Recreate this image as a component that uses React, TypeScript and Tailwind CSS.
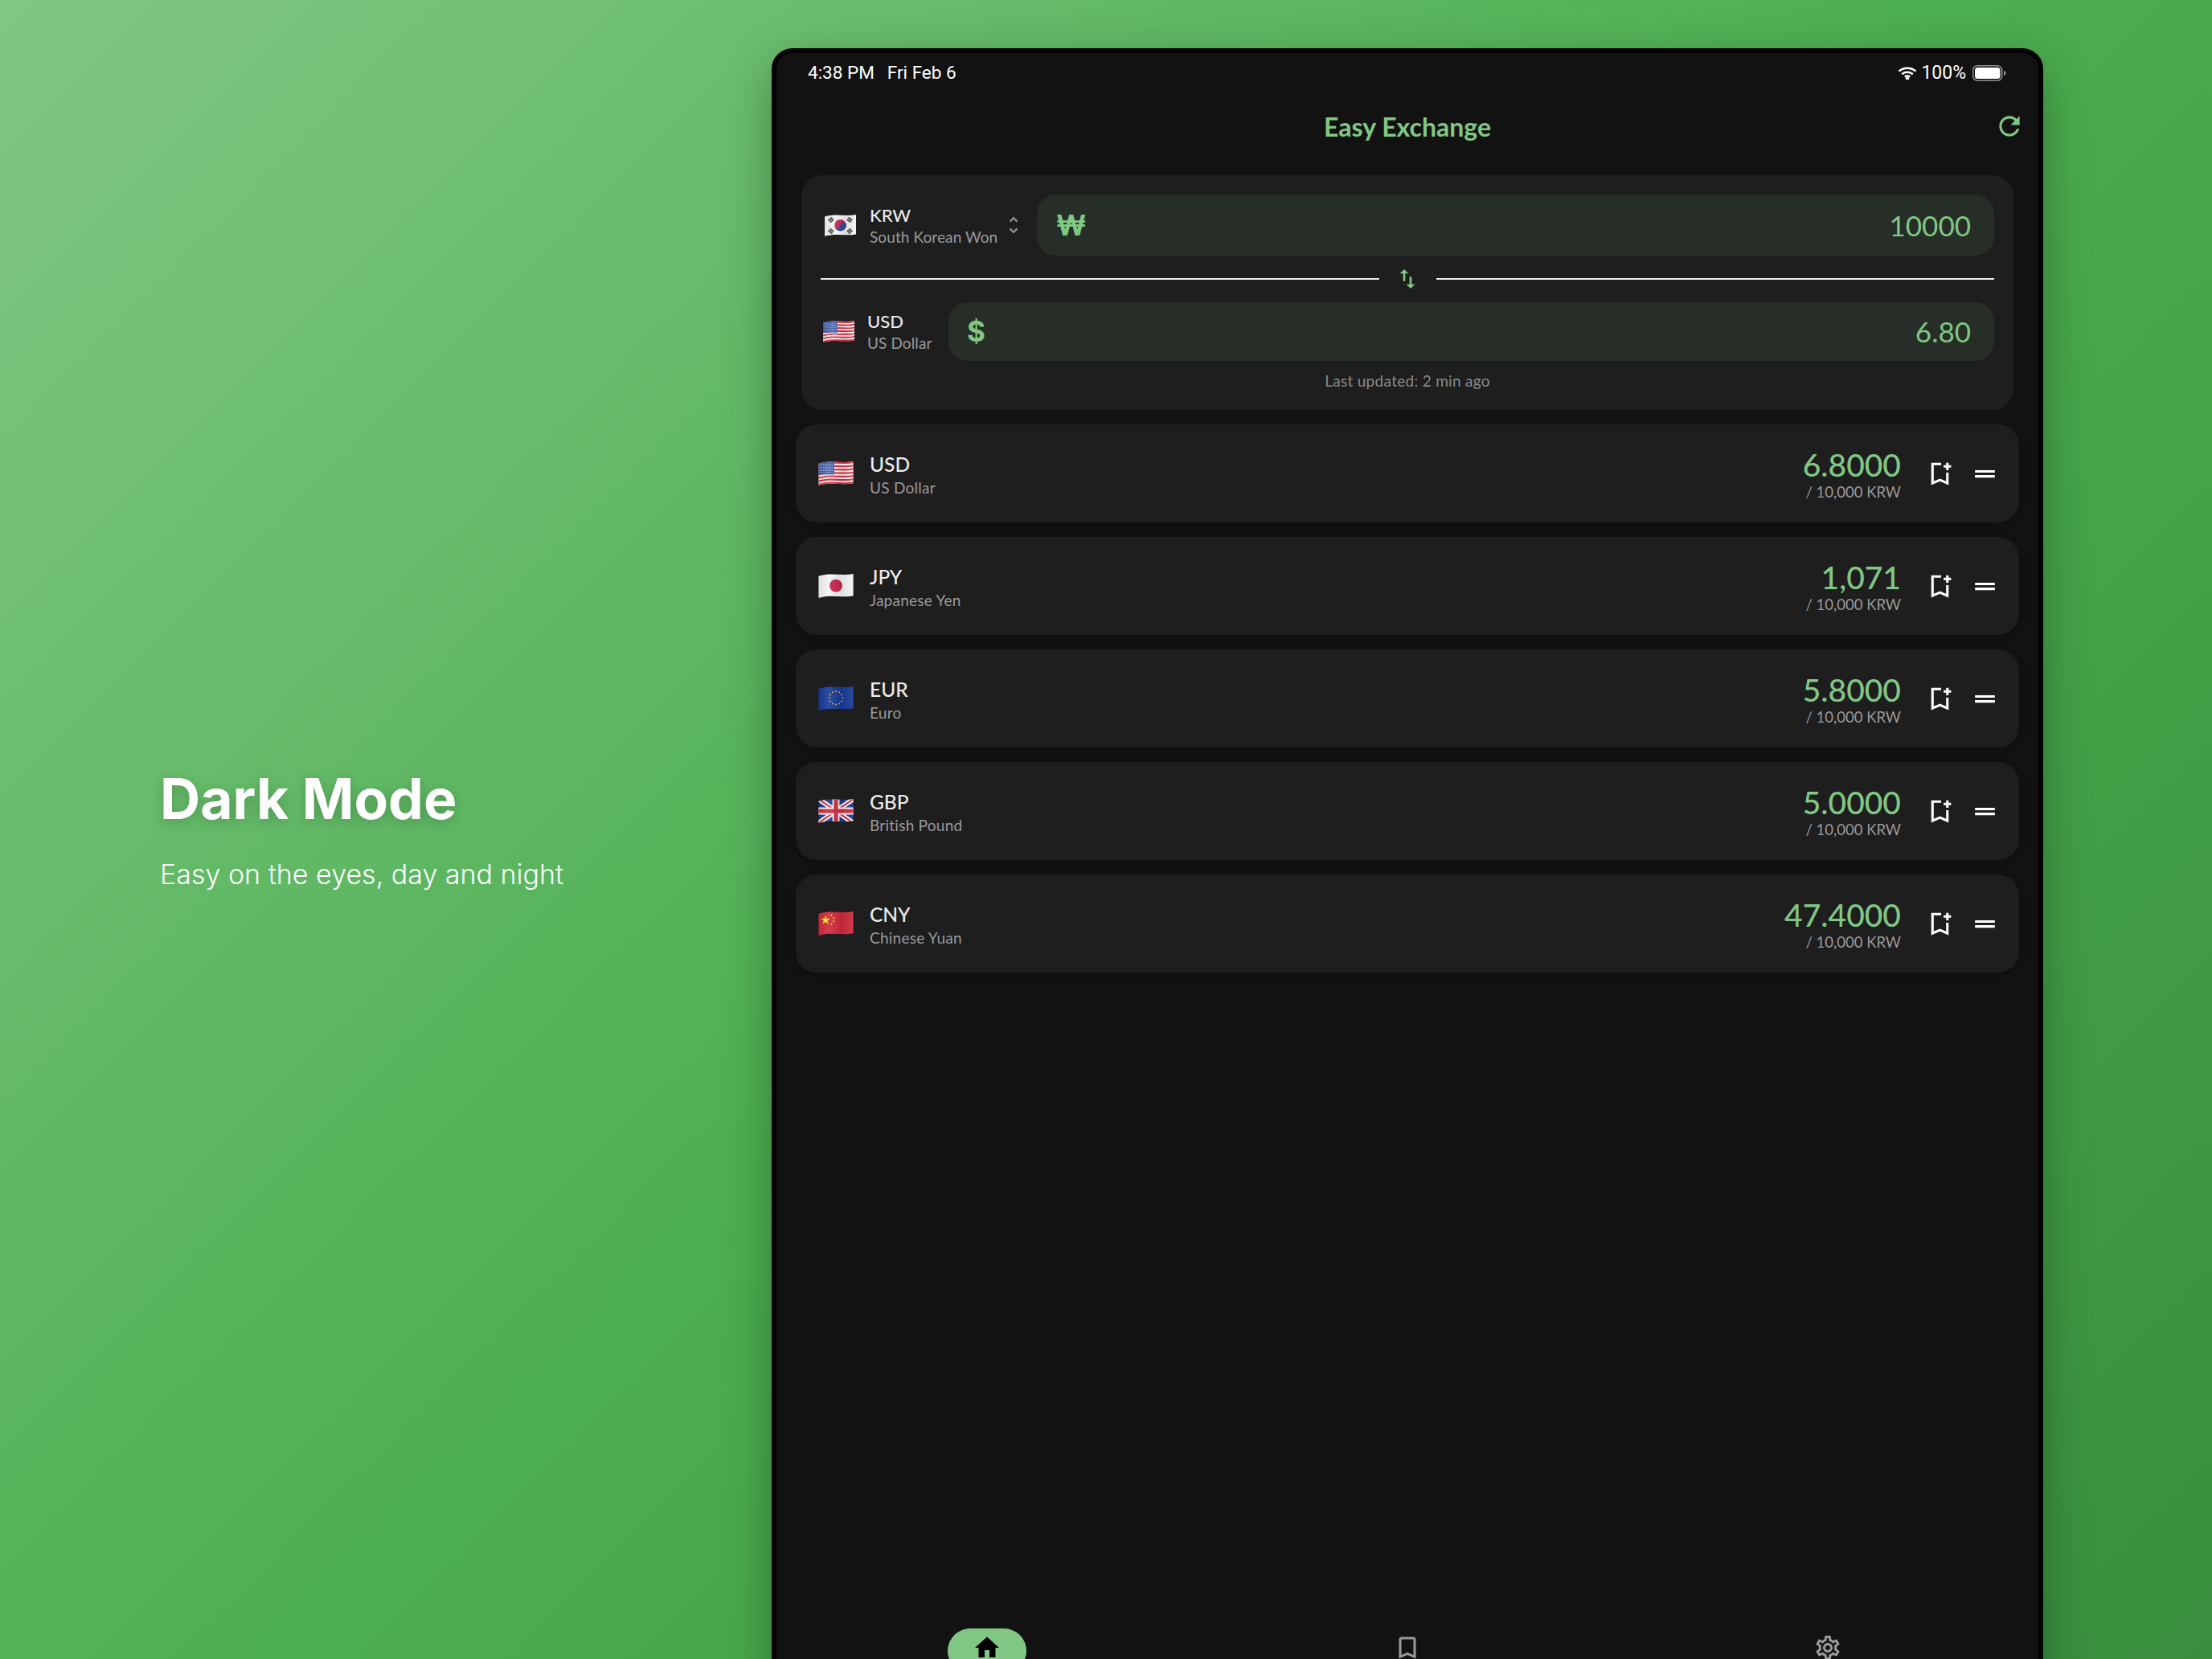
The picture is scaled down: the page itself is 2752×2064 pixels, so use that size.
import React from "react";

const G = "#81C784";

function Flag({ code, w, h }: { code: string; w: number; h: number }) {
  const id = `f-${code}-${w}`;
  const band = (y0: number, y1: number) =>
    `M0 ${y0 + 4} C21 ${y0 - 3} 43 ${y0 + 4} 64 ${y0} L64 ${y1} C43 ${y1 + 4} 21 ${y1 - 3} 0 ${y1 + 4} Z`;
  const stripes = [];
  if (code === "USD") {
    for (let i = 0; i < 13; i += 2) {
      stripes.push(<path key={i} d={band(0 + i * 3.1, 0 + (i + 1) * 3.1)} fill="#d22f3f" />);
    }
  }
  const dots = [];
  if (code === "USD") {
    for (let r = 0; r < 6; r++) {
      for (let c = 0; c < 8; c++) {
        dots.push(<circle key={`${r}-${c}`} cx={2.5 + c * 3.2 + (r % 2) * 1.2} cy={5 + r * 3} r={0.75} fill="#e8ecf8" />);
      }
    }
  }
  const euStars = [];
  if (code === "EUR") {
    for (let i = 0; i < 12; i++) {
      const a = (i * Math.PI) / 6;
      euStars.push(<circle key={i} cx={32 + Math.cos(a) * 12} cy={21 + Math.sin(a) * 12} r={1.3} fill="#f2c928" />);
    }
  }
  const trig = (x: number, y: number, rot: number, k: number) => (
    <g key={k} transform={`translate(${x} ${y}) rotate(${rot})`} fill="#2b2b2b">
      <rect x={-5} y={-4.2} width={10} height={2} />
      <rect x={-5} y={-1} width={10} height={2} />
      <rect x={-5} y={2.2} width={10} height={2} />
    </g>
  );
  return (
    <svg width={w} height={h} viewBox="0 0 64 44" className="shrink-0">
      <defs>
        <clipPath id={`${id}-c`}>
          <path d={band(0, 40)} />
        </clipPath>
        <linearGradient id={`${id}-g`} x1="0" x2="1" y1="0" y2="0">
          <stop offset="0" stopColor="#000" stopOpacity="0.08" />
          <stop offset="0.3" stopColor="#fff" stopOpacity="0.1" />
          <stop offset="0.65" stopColor="#000" stopOpacity="0.08" />
          <stop offset="1" stopColor="#fff" stopOpacity="0.08" />
        </linearGradient>
      </defs>
      <g clipPath={`url(#${id}-c)`}>
        {code === "USD" && (
          <>
            <rect width="64" height="44" fill="#f4f4f4" />
            {stripes}
            <rect width="29" height="24" fill="#3d5aa8" />
            {dots}
          </>
        )}
        {code === "JPY" && (
          <>
            <rect width="64" height="44" fill="#f5f5f5" />
            <circle cx="32" cy="21.5" r="11.5" fill="#c9264d" />
          </>
        )}
        {code === "EUR" && (
          <>
            <rect width="64" height="44" fill="#173a9a" />
            {euStars}
          </>
        )}
        {code === "GBP" && (
          <>
            <rect width="64" height="44" fill="#1f3a8c" />
            <path d="M0 0 L64 44 M64 0 L0 44" stroke="#f5f5f5" strokeWidth="9" />
            <path d="M0 0 L64 44 M64 0 L0 44" stroke="#cf2a3f" strokeWidth="3" />
            <path d="M32 0 V44 M0 22 H64" stroke="#f5f5f5" strokeWidth="13" />
            <path d="M32 0 V44 M0 22 H64" stroke="#cf2a3f" strokeWidth="7.5" />
          </>
        )}
        {code === "CNY" && (
          <>
            <rect width="64" height="44" fill="#cf2a3c" />
            <polygon
              points="11,8 13,14 19.5,14 14.3,17.8 16.2,24 11,20.2 5.8,24 7.7,17.8 2.5,14 9,14"
              transform="translate(2 -1)"
              fill="#f7e11c"
            />
            <circle cx="24" cy="7" r="1.5" fill="#f7e11c" />
            <circle cx="28" cy="12" r="1.5" fill="#f7e11c" />
            <circle cx="28" cy="18" r="1.5" fill="#f7e11c" />
            <circle cx="24" cy="23" r="1.5" fill="#f7e11c" />
          </>
        )}
        {code === "KRW" && (
          <>
            <rect width="64" height="44" fill="#f4f4f4" />
            <circle cx="32" cy="21.5" r="12" fill="#c9264d" />
            <path d="M20 21.5 a12 12 0 0 0 24 0 a6 6 0 0 0 -12 0 a6 6 0 0 1 -12 0 Z" fill="#2f4a9c" />
            {trig(13, 10.5, -35, 1)}
            {trig(51, 10.5, 35, 2)}
            {trig(13, 33.5, 35, 3)}
            {trig(51, 33.5, -35, 4)}
          </>
        )}
        <rect width="64" height="44" fill={`url(#${id}-g)`} />
      </g>
    </svg>
  );
}

function MI({ d, size, color, className }: { d: string; size: number; color: string; className?: string }) {
  return (
    <svg width={size} height={size} viewBox="0 0 24 24" fill={color} className={className}>
      <path d={d} />
    </svg>
  );
}

const ICONS = {
  refresh:
    "M17.65 6.35C16.2 4.9 14.21 4 12 4c-4.42 0-7.99 3.58-7.99 8s3.57 8 7.99 8c3.73 0 6.84-2.55 7.73-6h-2.08c-.82 2.33-3.04 4-5.65 4-3.31 0-6-2.69-6-6s2.69-6 6-6c1.66 0 3.14.69 4.22 1.78L13 11h7V4l-2.35 2.35z",
  swap: "M16 17.01V10h-2v7.01h-3L15 21l4-3.99h-3zM9 3L5 6.99h3V14h2V6.99h3L9 3z",
  unfold:
    "M12 5.83L15.17 9l1.41-1.41L12 3 7.41 7.59 8.83 9 12 5.83zm0 12.34L8.83 15l-1.41 1.41L12 21l4.59-4.59L15.17 15 12 18.17z",
  bookmarkAdd: "M17 11v6.97l-5-2.14-5 2.14V5h6V3H5v18l7-3 7 3V11h-2zm4-4h-2v2h-2V7h-2V5h2V3h2v2h2v2z",
  drag: "M20 9H4v2h16V9zm0 4H4v2h16v-2z",
  home: "M10 20v-6h4v6h5v-8h3L12 3 2 12h3v8z",
  bookmark: "M17 3H7c-1.1 0-2 .9-2 2v16l7-3 7 3V5c0-1.1-.9-2-2-2zm0 15l-5-2.18L7 18V5h10v13z",
  gear: "M19.43 12.98c.04-.32.07-.64.07-.98 0-.34-.03-.66-.07-.98l2.11-1.65c.19-.15.24-.42.12-.64l-2-3.46c-.09-.16-.26-.25-.44-.25-.06 0-.12.01-.17.03l-2.49 1c-.52-.4-1.08-.73-1.69-.98l-.38-2.65C14.46 2.18 14.25 2 14 2h-4c-.25 0-.46.18-.49.42l-.38 2.65c-.61.25-1.17.59-1.69.98l-2.49-1c-.06-.02-.12-.03-.18-.03-.17 0-.34.09-.43.25l-2 3.46c-.13.22-.07.49.12.64l2.11 1.65c-.04.32-.07.65-.07.98 0 .33.03.66.07.98l-2.11 1.65c-.19.15-.24.42-.12.64l2 3.46c.09.16.26.25.44.25.06 0 .12-.01.17-.03l2.49-1c.52.4 1.08.73 1.69.98l.38 2.65c.03.24.24.42.49.42h4c.25 0 .46-.18.49-.42l.38-2.65c.61-.25 1.17-.59 1.69-.98l2.49 1c.06.02.12.03.18.03.17 0 .34-.09.43-.25l2-3.46c.12-.22.07-.49-.12-.64l-2.11-1.65zm-1.98-1.71c.04.31.05.52.05.73 0 .21-.02.43-.05.73l-.14 1.13.89.7 1.08.84-.7 1.21-1.27-.51-1.04-.42-.9.68c-.43.32-.84.56-1.25.73l-1.06.43-.16 1.13-.2 1.35h-1.4l-.19-1.35-.16-1.13-1.06-.43c-.43-.18-.83-.41-1.23-.71l-.91-.7-1.06.43-1.27.51-.7-1.21 1.08-.84.89-.7-.14-1.13c-.03-.31-.05-.54-.05-.74s.02-.43.05-.73l.14-1.13-.89-.7-1.08-.84.7-1.21 1.27.51 1.04.42.9-.68c.43-.32.84-.56 1.25-.73l1.06-.43.16-1.13.2-1.35h1.39l.19 1.35.16 1.13 1.06.43c.43.18.83.41 1.23.71l.91.7 1.06-.43 1.27-.51.7 1.21-1.07.85-.89.7.14 1.13zM12 8c-2.21 0-4 1.79-4 4s1.79 4 4 4 4-1.79 4-4-1.79-4-4-4zm0 6c-1.1 0-2-.9-2-2s.9-2 2-2 2 .9 2 2-.9 2-2 2z",
};

const rows = [
  { code: "USD", name: "US Dollar", value: "6.8000" },
  { code: "JPY", name: "Japanese Yen", value: "1,071" },
  { code: "EUR", name: "Euro", value: "5.8000" },
  { code: "GBP", name: "British Pound", value: "5.0000" },
  { code: "CNY", name: "Chinese Yuan", value: "47.4000" },
];

function StatusBar() {
  return (
    <div className="flex h-[50px] shrink-0 items-center justify-between pl-[39px] pr-[40px] font-['Roboto',sans-serif] text-[23px] text-white">
      <div className="flex gap-[16px] text-[22.5px]">
        <span>4:38 PM</span>
        <span>Fri Feb 6</span>
      </div>
      <div className="flex items-center gap-[5px]">
        <svg width="24" height="16" viewBox="0 0 24 16" fill="none" stroke="#fff" strokeWidth="2.6">
          <path d="M1.5 5.6C7.3.4 16.7.4 22.5 5.6" />
          <path d="M5.2 9.2c3.8-3.3 9.8-3.3 13.6 0" />
          <path d="M8.8 12.6c1.8-1.5 4.6-1.5 6.4 0" />
          <circle cx="12" cy="14.6" r="1" fill="#fff" />
        </svg>
        <span>100%</span>
        <svg width="42" height="20" viewBox="0 0 42 20" className="ml-[3px]">
          <rect x="0.75" y="0.75" width="36" height="18.5" rx="5.5" fill="none" stroke="#8f8f8f" strokeWidth="1.5" />
          <rect x="3" y="3" width="31.5" height="14" rx="3.5" fill="#fff" />
          <path d="M39 7c1.6.4 2.6 1.6 2.6 3s-1 2.6-2.6 3z" fill="#8f8f8f" />
        </svg>
      </div>
    </div>
  );
}

function Header() {
  return (
    <div className="grid h-[102px] shrink-0 grid-cols-[1fr_auto_1fr] items-center pb-[14px] pr-[17px]">
      <div />
      <div className="pb-[4px] pl-[17px] text-[32px] font-bold leading-none text-[#81C784]">Easy Exchange</div>
      <div className="flex justify-end pb-[6px]">
        <MI d={ICONS.refresh} size={38} color={G} />
      </div>
    </div>
  );
}

function Converter() {
  return (
    <div className="mx-[31px] h-[292px] shrink-0 rounded-[26px] bg-[#1e1e1e] px-[24px] pt-[24px]">
      <div className="flex h-[76px]">
        <div className="flex w-[269px] shrink-0 items-center pl-[5px]">
          <Flag code="KRW" w={39} h={27} />
          <div className="ml-[17px] w-[165px] shrink-0 pt-[2px]">
            <div className="text-[22px] font-medium leading-[28px] text-[#ececec]">KRW</div>
            <div className="text-[19px] leading-[26px] tracking-[0.1px] text-[#9a9a9a]">South Korean Won</div>
          </div>
          <MI d={ICONS.unfold} size={28} color="#8f8f8f" />
        </div>
        <div className="flex flex-1 items-center justify-between rounded-[24px] bg-[#272e28] pl-[24px] pr-[29px]">
          <span className="font-['Inter',sans-serif] text-[36px] font-bold leading-none text-[#81C784]">₩</span>
          <span className="text-[35px] leading-none text-[#81C784]">10000</span>
        </div>
      </div>
      <div className="flex h-[58px] items-center">
        <div className="h-[2px] flex-1 bg-[#ececec]" />
        <div className="flex w-[71px] justify-center">
          <MI d={ICONS.swap} size={32} color={G} />
        </div>
        <div className="h-[2px] flex-1 bg-[#ececec]" />
      </div>
      <div className="flex h-[73px]">
        <div className="flex w-[159px] shrink-0 items-center pl-[3px]">
          <Flag code="USD" w={39} h={27} />
          <div className="ml-[16px] pt-[1px]">
            <div className="text-[22px] font-medium leading-[28px] text-[#ececec]">USD</div>
            <div className="text-[19px] leading-[26px] tracking-[0.1px] text-[#9a9a9a]">US Dollar</div>
          </div>
        </div>
        <div className="flex flex-1 items-center justify-between rounded-[24px] bg-[#272e28] pl-[23px] pr-[29px]">
          <span className="font-['Inter',sans-serif] text-[35px] font-bold leading-none text-[#81C784]">$</span>
          <span className="text-[35px] leading-none text-[#81C784]">6.80</span>
        </div>
      </div>
      <div className="flex h-[50px] items-center justify-center text-[19px] tracking-[0.3px] text-[#8a8a8a]">
        Last updated: 2 min ago
      </div>
    </div>
  );
}

function Row({ code, name, value }: { code: string; name: string; value: string }) {
  return (
    <div className="flex h-[122px] items-center rounded-[26px] bg-[#1e1e1e] pl-[28px] pr-[24px] shadow-[0_2px_8px_rgba(0,0,0,0.25)]">
      <Flag code={code} w={44} h={30} />
      <div className="ml-[20px] flex-1 pt-[3px]">
        <div className="text-[24.5px] font-medium leading-[32px] text-[#ececec]">{code}</div>
        <div className="text-[19px] leading-[26px] tracking-[0.25px] text-[#9a9a9a]">{name}</div>
      </div>
      <div className="mr-[30px] text-right">
        <div className="text-[39px] font-medium leading-[46px] text-[#81C784]">{value}</div>
        <div className="text-[18.5px] leading-[23px] text-[#9a9a9a]">/ 10,000 KRW</div>
      </div>
      <MI d={ICONS.bookmarkAdd} size={37} color="#fff" />
      <MI d={ICONS.drag} size={37} color="#fff" className="ml-[19px]" />
    </div>
  );
}

function BottomNav() {
  return (
    <div className="grid h-[148px] shrink-0 grid-cols-3">
      <div className="flex justify-center">
        <div className="flex h-[56px] w-[98px] justify-center rounded-full bg-[#81C784] pt-[6px]">
          <MI d={ICONS.home} size={36} color="#000" />
        </div>
      </div>
      <div className="flex justify-center pt-[6px]">
        <MI d={ICONS.bookmark} size={36} color="#9a9a9a" />
      </div>
      <div className="flex justify-center pt-[6px]">
        <MI d={ICONS.gear} size={36} color="#9a9a9a" />
      </div>
    </div>
  );
}

export default function App() {
  return (
    <div className="flex h-[2064px] w-[2752px] overflow-hidden bg-[linear-gradient(135deg,#81C784_0%,#4CAF50_50%,#388E3C_100%)] font-['Lato',sans-serif]">
      <div className="flex w-[960px] shrink-0 flex-col justify-center pb-[2px] pl-[199px]">
        <div className="font-['Inter',sans-serif] text-[69.5px] font-bold leading-[90px] text-white [text-shadow:0_4px_16px_rgba(0,0,0,0.2)]">
          Dark Mode
        </div>
        <div className="mt-[24px] font-['Inter',sans-serif] text-[34px] font-light leading-[50px] text-white">
          Easy on the eyes, day and night
        </div>
      </div>
      <div className="mt-[60px] h-[2120px] w-[1582px] shrink-0 rounded-t-[26px] border-[6px] border-black bg-[#121212] shadow-[0_20px_60px_rgba(0,0,0,0.3)]">
        <div className="flex h-full flex-col rounded-t-[20px] bg-[#121212]">
          <StatusBar />
          <Header />
          <Converter />
          <div className="mx-[24px] mt-[18px] flex flex-col gap-[18px]">
            {rows.map((r) => (
              <Row key={r.code} {...r} />
            ))}
          </div>
          <div className="flex-1" />
          <BottomNav />
        </div>
      </div>
    </div>
  );
}
